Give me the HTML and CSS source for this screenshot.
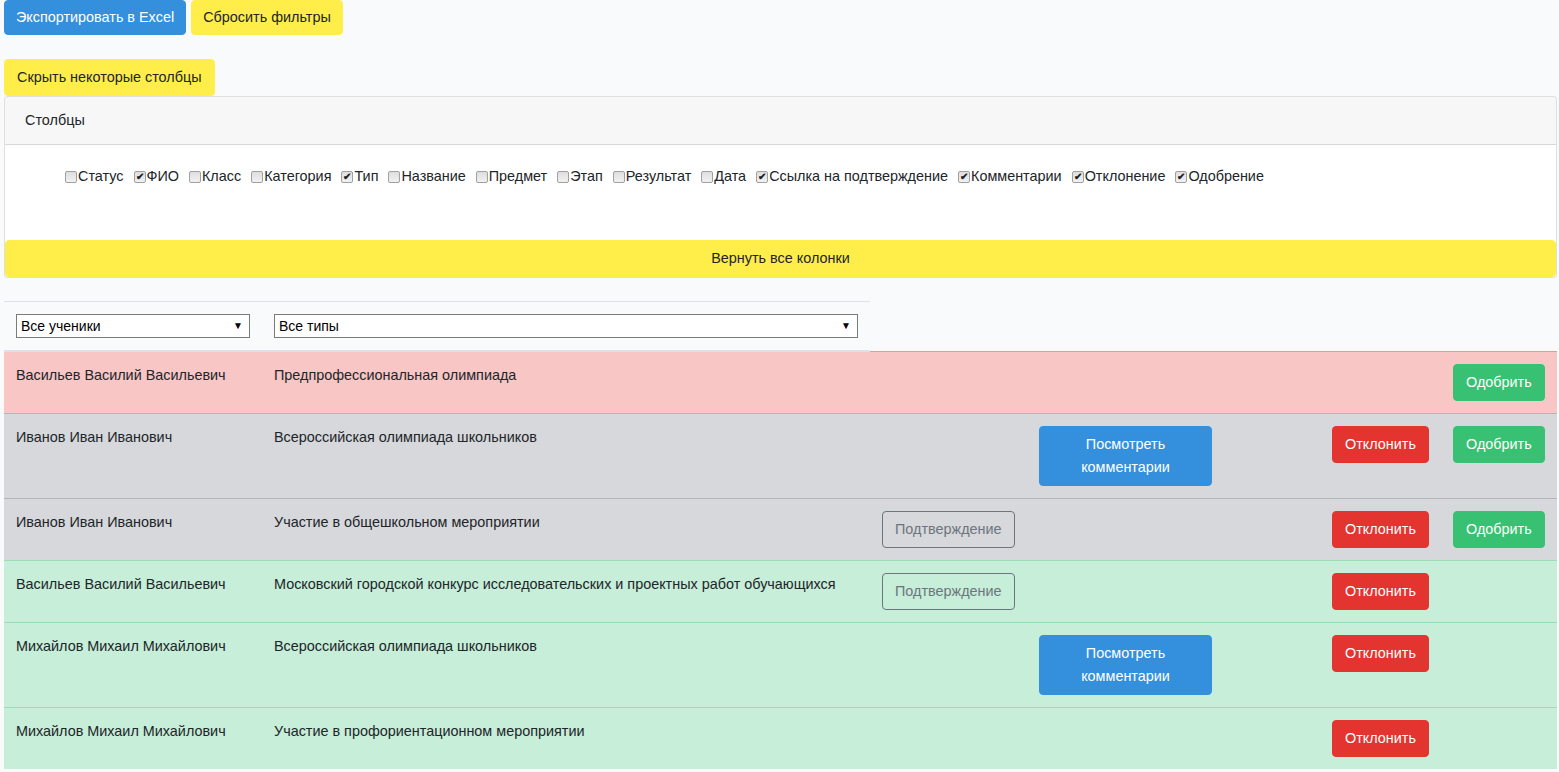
FILE: index.html
```html
<!DOCTYPE html>
<html lang="ru">
<head>
<meta charset="utf-8">
<title>Достижения</title>
<link rel="stylesheet" href="styles.css">
</head>
<body>
<div class="page">
  <div class="toolbar">
    <button class="btn btn-primary btn-top">Экспортировать в Excel</button>
    <button class="btn btn-warning btn-top">Сбросить фильтры</button>
  </div>
  <div class="toolbar toolbar-second">
    <button class="btn btn-warning btn-hide">Скрыть некоторые столбцы</button>
  </div>
  <div class="card">
    <div class="card-header">Столбцы</div>
    <div class="card-body">
      <ul class="cols">
        <li><input type="checkbox" class="cb">Статус</li>
        <li><input type="checkbox" class="cb" checked>ФИО</li>
        <li><input type="checkbox" class="cb">Класс</li>
        <li><input type="checkbox" class="cb">Категория</li>
        <li><input type="checkbox" class="cb" checked>Тип</li>
        <li><input type="checkbox" class="cb">Название</li>
        <li><input type="checkbox" class="cb">Предмет</li>
        <li><input type="checkbox" class="cb">Этап</li>
        <li><input type="checkbox" class="cb">Результат</li>
        <li><input type="checkbox" class="cb">Дата</li>
        <li><input type="checkbox" class="cb" checked>Ссылка на подтверждение</li>
        <li><input type="checkbox" class="cb" checked>Комментарии</li>
        <li><input type="checkbox" class="cb" checked>Отклонение</li>
        <li><input type="checkbox" class="cb" checked>Одобрение</li>
      </ul>
    </div>
    <button class="btn btn-warning btn-block">Вернуть все колонки</button>
  </div>

  <table class="table">
    <colgroup>
      <col class="c-name"><col class="c-type"><col class="c-proof"><col class="c-comm"><col class="c-rej"><col class="c-app">
    </colgroup>
    <thead>
      <tr>
        <th><div class="sel"><select><option>Все ученики</option></select></div></th>
        <th><div class="sel"><select><option>Все типы</option></select></div></th>
      </tr>
    </thead>
    <tbody>
      <tr class="row-danger">
        <td>Васильев Василий Васильевич</td>
        <td>Предпрофессиональная олимпиада</td>
        <td></td>
        <td></td>
        <td></td>
        <td><button class="btn btn-success">Одобрить</button></td>
      </tr>
      <tr class="row-secondary">
        <td>Иванов Иван Иванович</td>
        <td>Всероссийская олимпиада школьников</td>
        <td></td>
        <td><button class="btn btn-primary btn-comments">Посмотреть комментарии</button></td>
        <td><button class="btn btn-danger">Отклонить</button></td>
        <td><button class="btn btn-success">Одобрить</button></td>
      </tr>
      <tr class="row-secondary">
        <td>Иванов Иван Иванович</td>
        <td>Участие в общешкольном мероприятии</td>
        <td><button class="btn btn-outline">Подтверждение</button></td>
        <td></td>
        <td><button class="btn btn-danger">Отклонить</button></td>
        <td><button class="btn btn-success">Одобрить</button></td>
      </tr>
      <tr class="row-success">
        <td>Васильев Василий Васильевич</td>
        <td>Московский городской конкурс исследовательских и проектных работ обучающихся</td>
        <td><button class="btn btn-outline">Подтверждение</button></td>
        <td></td>
        <td><button class="btn btn-danger">Отклонить</button></td>
        <td></td>
      </tr>
      <tr class="row-success">
        <td>Михайлов Михаил Михайлович</td>
        <td>Всероссийская олимпиада школьников</td>
        <td></td>
        <td><button class="btn btn-primary btn-comments">Посмотреть комментарии</button></td>
        <td><button class="btn btn-danger">Отклонить</button></td>
        <td></td>
      </tr>
      <tr class="row-success">
        <td>Михайлов Михаил Михайлович</td>
        <td>Участие в профориентационном мероприятии</td>
        <td></td>
        <td></td>
        <td><button class="btn btn-danger">Отклонить</button></td>
        <td></td>
      </tr>
    </tbody>
  </table>
</div>
</body>
</html>
```

FILE: styles.css
```css
* { box-sizing: border-box; }

body {
  margin: 0;
  background: #f8fafc;
  font-family: "Liberation Sans", Arial, sans-serif;
  font-size: 14.4px;
  line-height: 1.6;
  color: #212529;
}

.page {
  padding: 0 2px 0 4px;
}

.toolbar {
  display: flex;
  gap: 5px;
}

.toolbar-second {
  margin-top: 24px;
}

.btn {
  display: inline-block;
  font: inherit;
  font-size: 14.4px;
  line-height: 23px;
  padding: 6px 12px;
  border: 1px solid transparent;
  border-radius: 4px;
  text-align: center;
  white-space: nowrap;
  cursor: pointer;
  background: transparent;
}

.btn-top {
  padding: 5px 11px;
}

.btn-primary { background: #3490dc; border-color: #3490dc; color: #fff; }
.btn-warning { background: #ffed4a; border-color: #ffed4a; color: #212529; }
.btn-success { background: #38c172; border-color: #38c172; color: #fff; }
.btn-danger  { background: #e3342f; border-color: #e3342f; color: #fff; }
.btn-outline { color: #6c757d; border-color: #6c757d; background: transparent; }

.btn-comments {
  width: 173px;
  white-space: normal;
}

.btn-block {
  display: block;
  width: 100%;
}

/* card */
.card {
  background: #fff;
  border: 1px solid rgba(0, 0, 0, 0.125);
  border-radius: 4px;
  overflow: hidden;
}

.card-header {
  padding: 12px 20px;
  line-height: 23px;
  background: rgba(0, 0, 0, 0.03);
  border-bottom: 1px solid rgba(0, 0, 0, 0.125);
}

.card-body {
  padding: 20px 20px 52px;
}

.cols {
  list-style: none;
  margin: 0;
  padding: 0 0 0 40px;
  display: flex;
  flex-wrap: wrap;
  line-height: 23px;
}

.cols li {
  display: flex;
  align-items: center;
  margin-right: 10px;
}

.cb {
  appearance: none;
  -webkit-appearance: none;
  width: 12px;
  height: 12px;
  margin: 0 1px 0 0;
  border: 1px solid #a0a0a0;
  border-radius: 2px;
  background: linear-gradient(#dedede, #f1f1f1);
  position: relative;
  flex: none;
}

.cb:checked::after {
  content: "✔";
  position: absolute;
  left: 1px;
  top: -5px;
  font-size: 10px;
  font-weight: bold;
  color: #222;
  line-height: 20px;
}

/* table */
.table {
  margin-top: 23px;
  width: 1553px;
  border-collapse: collapse;
  table-layout: fixed;
}

.c-name  { width: 258px; }
.c-type  { width: 608px; }
.c-proof { width: 157px; }
.c-comm  { width: 293px; }
.c-rej   { width: 121px; }
.c-app   { width: 116px; }

.table th {
  padding: 12px;
  text-align: left;
  border-top: 1px solid #dee2e6;
  border-bottom: 2px solid #dee2e6;
  vertical-align: bottom;
  font-weight: normal;
}

.table td {
  padding: 12px;
  vertical-align: top;
  line-height: 23px;
  border-top: 1px solid #dee2e6;
}

.row-danger td { background: #f7c6c5; border-top-color: #f09593; }
.row-secondary td { background: #d6d8db; border-top-color: #b3b7bb; }
.row-success td { background: #c6eed8; border-top-color: #98dfb6; }

.sel {
  position: relative;
}

.sel select {
  appearance: none;
  -webkit-appearance: none;
  display: block;
  width: 100%;
  height: 24px;
  padding: 0 20px 0 4px;
  border: 1px solid #7a7a7a;
  border-radius: 0;
  background: #fff;
  font-family: "Liberation Sans", Arial, sans-serif;
  font-size: 14px;
  color: #000;
}

.sel::after {
  content: "▼";
  position: absolute;
  right: 7px;
  top: 6px;
  font-size: 10px;
  line-height: 12px;
  color: #000;
  pointer-events: none;
}
```
